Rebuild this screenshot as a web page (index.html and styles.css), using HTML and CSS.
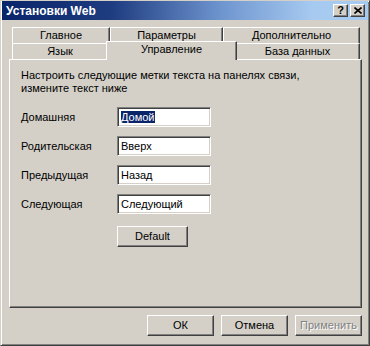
FILE: index.html
```html
<!DOCTYPE html>
<html lang="ru">
<head>
    <meta charset="UTF-8">
    <title>Установки Web</title>
    <link rel="stylesheet" href="styles.css">
</head>
<body>
<div class="window">
    <!--заголовок-->
    <div class="titlebar">
        <span class="title">Установки Web</span>
        <div class="caption">
            <span class="cap-btn">?</span>
            <span class="cap-btn">
                <svg width="8" height="7" viewBox="0 0 8 7"><path d="M0.5 0.5 L7.5 6.5 M7.5 0.5 L0.5 6.5" stroke="#000" stroke-width="1.6"/></svg>
            </span>
        </div>
    </div>
    <!--вкладки-->
    <div class="tabs">
        <div class="tab-row">
            <div class="tab w98">Главное</div>
            <div class="tab w113">Параметры</div>
            <div class="tab w137">Дополнительно</div>
        </div>
        <div class="tab-row">
            <div class="tab w96">Язык</div>
            <div class="tab w127 current">Управление</div>
            <div class="tab w125">База данных</div>
        </div>
    </div>
    <div class="panel">
        <p class="intro">Настроить следующие метки текста на панелях связи,<br>измените текст ниже</p>
        <div class="form">
            <div class="row">
                <span class="label">Домашняя</span>
                <div class="field"><span class="sel">Домой</span></div>
            </div>
            <div class="row">
                <span class="label">Родительская</span>
                <div class="field">Вверх</div>
            </div>
            <div class="row">
                <span class="label">Предыдущая</span>
                <div class="field">Назад</div>
            </div>
            <div class="row">
                <span class="label">Следующая</span>
                <div class="field">Следующий</div>
            </div>
        </div>
        <div class="btn default-btn">Default</div>
    </div>
    <div class="buttons">
        <div class="btn ok">ОК</div>
        <div class="btn">Отмена</div>
        <div class="btn disabled">Применить</div>
    </div>
</div>
</body>
</html>
```

FILE: styles.css
```css
* {
    margin: 0;
    padding: 0;
    box-sizing: border-box;
}

body {
    background-color: #d4d0c8;
    font-family: "Liberation Sans", Arial, sans-serif;
    font-size: 11px;
    color: #000;
}

.window {
    width: 370px;
    height: 346px;
    background-color: #d4d0c8;
    border: 1px solid;
    border-color: #d4d0c8 #404040 #404040 #d4d0c8;
    box-shadow: inset 1px 1px #fff, inset -1px -1px #808080;
}

.titlebar {
    height: 19px;
    margin: 0 1px;
    display: flex;
    align-items: center;
    justify-content: space-between;
    background: linear-gradient(to right, #0a246a 0%, #1e3c80 30%, #6f95cf 60%, #a6caf0 85%, #a6caf0 100%);
}

.title {
    color: #fff;
    font-weight: bold;
    font-size: 12px;
    padding-left: 4px;
}

.caption {
    display: flex;
    gap: 2px;
    padding-right: 3px;
}

.cap-btn {
    width: 15px;
    height: 13px;
    display: flex;
    align-items: center;
    justify-content: center;
    background-color: #d4d0c8;
    border: 1px solid;
    border-color: #fff #404040 #404040 #fff;
    box-shadow: inset -1px -1px #808080;
    font-weight: bold;
    font-size: 11px;
    line-height: 1;
}

.tabs {
    margin: 7px 9px 0 11px;
}

.tab-row {
    display: flex;
    height: 16px;
}

.tab {
    height: 16px;
    line-height: 15px;
    text-align: center;
    background-color: #d4d0c8;
    border-top: 1px solid #fff;
    border-left: 1px solid #fff;
    border-right: 1px solid #404040;
    box-shadow: inset -1px 0 #808080;
}

.w98 { width: 98px; }
.w113 { width: 113px; }
.w137 { width: 137px; }
.w96 { width: 96px; }
.w127 { width: 127px; }
.w125 { width: 125px; }

.tab.current {
    position: relative;
    z-index: 1;
    height: 19px;
    margin: -2px -2px -1px;
    width: 131px;
    line-height: 15px;
}

.panel {
    height: 249px;
    margin: 0 7px 0 8px;
    padding: 9px 11px 0;
    border: 1px solid;
    border-color: #fff #404040 #404040 #fff;
    box-shadow: inset -1px -1px #808080;
}

.intro {
    line-height: 13px;
}

.form {
    margin-top: 12px;
    display: flex;
    flex-direction: column;
    gap: 9px;
}

.row {
    display: flex;
    align-items: center;
    height: 20px;
}

.label {
    width: 96px;
}

.field {
    width: 94px;
    height: 20px;
    padding: 3px 3px 0;
    background-color: #fff;
    border: 1px solid;
    border-color: #808080 #fff #fff #808080;
    box-shadow: inset 1px 1px #404040, inset -1px -1px #d4d0c8;
    line-height: 13px;
}

.sel {
    background-color: #0a246a;
    color: #fff;
}

.btn {
    height: 21px;
    line-height: 19px;
    text-align: center;
    background-color: #d4d0c8;
    border: 1px solid;
    border-color: #fff #404040 #404040 #fff;
    box-shadow: inset -1px -1px #808080;
}

.default-btn {
    width: 71px;
    margin: 12px 0 0 96px;
}

.buttons {
    display: flex;
    justify-content: flex-end;
    gap: 7px;
    margin: 7px 7px 0 0;
}

.buttons .btn {
    width: 67px;
}

.disabled {
    color: #808080;
    text-shadow: 1px 1px #fff;
}
```
